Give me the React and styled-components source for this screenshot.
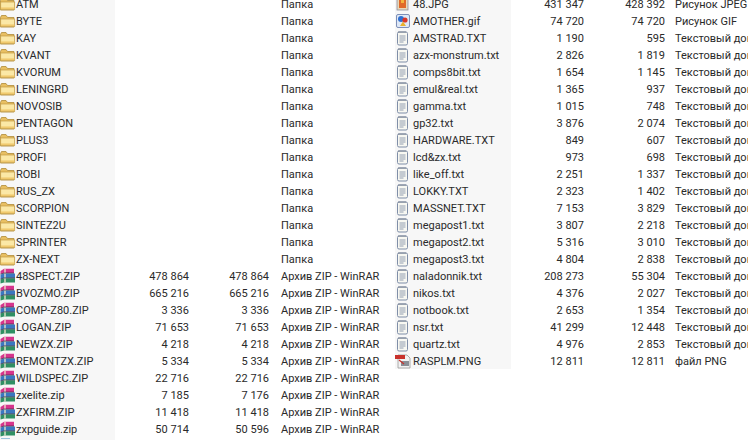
import React from 'react';
import styled, { createGlobalStyle } from 'styled-components';

const GlobalStyle = createGlobalStyle`
  html, body {
    margin: 0;
    padding: 0;
    background: #fff;
    overflow: hidden;
  }
`;

const Page = styled.div`
  width: 748px;
  height: 444px;
  overflow: hidden;
  display: flex;
  align-items: flex-start;
  background: #fff;
  font-family: Roboto, "Noto Sans", sans-serif;
  font-size: 11px;
  color: #2a2a2a;
`;

const Panel = styled.div`
  flex: none;
  width: ${({ $width }) => $width}px;
  margin-top: -5px;
`;

const Row = styled.div`
  display: grid;
  grid-template-columns: ${({ $cols }) => $cols};
  grid-template-rows: 17px;
  height: 17px;
  line-height: 19px;
  white-space: nowrap;
`;

const NameCell = styled.div`
  display: flex;
  align-items: flex-start;
  gap: ${({ $gap }) => $gap}px;
  background: #f7f7f7;
  overflow: hidden;
`;

const NumCell = styled.div`
  text-align: right;
`;

const TypeCell = styled.div`
  padding-left: ${({ $pad }) => $pad}px;
  overflow: hidden;
`;

const Stub = styled.div`
  width: 115px;
  height: 3px;
  background: #f7f7f7;
  display: flex;
  padding: 1px 0 0 1px;
  box-sizing: border-box;
`;

const StubMark = styled.div`
  width: 9px;
  height: 1px;
  background: #9cc4dc;
`;

const FileIcon = styled.svg`
  flex: none;
  width: 16px;
  height: 16px;
  align-self: center;
`;

const FolderIcon = () => (
  <FileIcon viewBox="0 0 16 16">
    <path d="M0.5 4.5 L1.5 2.5 H6 L7.5 4.5 H14 V14 H0.5 Z" fill="#e8bf62" stroke="#b08c3a" strokeWidth="0.8" />
    <path d="M0.6 6 H14.6 V13.6 H0.6 Z" fill="#fbe8a6" stroke="#c29a42" strokeWidth="0.7" />
    <path d="M1 12.2 H14.4" stroke="#efc668" strokeWidth="1.4" />
  </FileIcon>
);

const RarIcon = () => (
  <FileIcon viewBox="0 0 16 16">
    <path d="M0.5 3 L4 0.8 H14 V5 H4 L0.5 6 Z" fill="#d6358c" />
    <path d="M0.5 6.8 L4 5.4 H15 V9.8 H4 L0.5 11 Z" fill="#3a78c0" />
    <path d="M0.5 11.4 L4 10.2 H15 V14.6 H4 L0.5 15.6 Z" fill="#2f8f63" />
    <path d="M5 0.8 V14.6" stroke="#efe9cf" strokeWidth="1.3" />
    <path d="M0.5 6.2 L4 5.1 H14 M0.5 11.1 L4 9.9 H15" stroke="#23233a" strokeWidth="0.7" fill="none" />
  </FileIcon>
);

const TextIcon = () => (
  <FileIcon viewBox="0 0 16 16">
    <rect x="2.5" y="2" width="10" height="13" rx="1.5" fill="#f8f8f2" stroke="#7f8ea8" />
    <path d="M4 1.2 V3 M6 1.2 V3 M8 1.2 V3 M10 1.2 V3" stroke="#6d7688" strokeWidth="0.9" />
    <path d="M4.5 6 H10.5 M4.5 8 H10.5 M4.5 10 H10.5 M4.5 12 H8.5" stroke="#8793a8" strokeWidth="0.9" />
  </FileIcon>
);

const JpegIcon = () => (
  <FileIcon viewBox="0 0 16 16">
    <rect x="2" y="0" width="11" height="14" fill="#e9d8b8" stroke="#8d8fa0" strokeWidth="0.8" />
    <rect x="4" y="2" width="7" height="10" fill="#e06a2a" />
    <path d="M6 2 H9 V7 H6 Z" fill="#f4b63c" />
  </FileIcon>
);

const GifIcon = () => (
  <FileIcon viewBox="0 0 16 16">
    <rect x="1.5" y="1.5" width="13" height="13" rx="1.5" fill="#dfe8f6" stroke="#7d8fb8" />
    <circle cx="6" cy="6" r="3" fill="#2f6fd0" />
    <circle cx="10" cy="7" r="2.6" fill="#d8362a" />
    <path d="M5 13 L8 8.5 L11 13 Z" fill="#e8b030" />
  </FileIcon>
);

const PngIcon = () => (
  <FileIcon viewBox="0 0 16 16">
    <path d="M3 2 H12 L15 5 V15 H3 Z" fill="#f2f2f2" stroke="#9a9a9a" strokeWidth="0.8" />
    <rect x="0" y="2" width="10" height="4" fill="#c8322c" />
    <rect x="6" y="8" width="8" height="5" fill="#8a8f96" />
    <path d="M4 7 L9 11" stroke="#c8322c" strokeWidth="1.2" />
  </FileIcon>
);

const icons = { folder: FolderIcon, rar: RarIcon, txt: TextIcon, jpg: JpegIcon, gif: GifIcon, png: PngIcon };

const folders = ['ATM', 'BYTE', 'KAY', 'KVANT', 'KVORUM', 'LENINGRD', 'NOVOSIB', 'PENTAGON', 'PLUS3', 'PROFI', 'ROBI', 'RUS_ZX', 'SCORPION', 'SINTEZ2U', 'SPRINTER', 'ZX-NEXT'];

const rarType = 'Архив ZIP - WinRAR';
const txtType = 'Текстовый документ';

const leftRows = [
  ...folders.map((name) => ({ icon: 'folder', name, size: '', packed: '', type: 'Папка' })),
  { icon: 'rar', name: '48SPECT.ZIP', size: '478 864', packed: '478 864', type: rarType },
  { icon: 'rar', name: 'BVOZMO.ZIP', size: '665 216', packed: '665 216', type: rarType },
  { icon: 'rar', name: 'COMP-Z80.ZIP', size: '3 336', packed: '3 336', type: rarType },
  { icon: 'rar', name: 'LOGAN.ZIP', size: '71 653', packed: '71 653', type: rarType },
  { icon: 'rar', name: 'NEWZX.ZIP', size: '4 218', packed: '4 218', type: rarType },
  { icon: 'rar', name: 'REMONTZX.ZIP', size: '5 334', packed: '5 334', type: rarType },
  { icon: 'rar', name: 'WILDSPEC.ZIP', size: '22 716', packed: '22 716', type: rarType },
  { icon: 'rar', name: 'zxelite.zip', size: '7 185', packed: '7 176', type: rarType },
  { icon: 'rar', name: 'ZXFIRM.ZIP', size: '11 418', packed: '11 418', type: rarType },
  { icon: 'rar', name: 'zxpguide.zip', size: '50 714', packed: '50 596', type: rarType },
];

const rightRows = [
  { icon: 'jpg', name: '48.JPG', size: '431 347', packed: '428 392', type: 'Рисунок JPEG' },
  { icon: 'gif', name: 'AMOTHER.gif', size: '74 720', packed: '74 720', type: 'Рисунок GIF' },
  ...[
    ['AMSTRAD.TXT', '1 190', '595'],
    ['azx-monstrum.txt', '2 826', '1 819'],
    ['comps8bit.txt', '1 654', '1 145'],
    ['emul&real.txt', '1 365', '937'],
    ['gamma.txt', '1 015', '748'],
    ['gp32.txt', '3 876', '2 074'],
    ['HARDWARE.TXT', '849', '607'],
    ['lcd&zx.txt', '973', '698'],
    ['like_off.txt', '2 251', '1 337'],
    ['LOKKY.TXT', '2 323', '1 402'],
    ['MASSNET.TXT', '7 153', '3 829'],
    ['megapost1.txt', '3 807', '2 218'],
    ['megapost2.txt', '5 316', '3 010'],
    ['megapost3.txt', '4 804', '2 838'],
    ['naladonnik.txt', '208 273', '55 304'],
    ['nikos.txt', '4 376', '2 027'],
    ['notbook.txt', '2 653', '1 354'],
    ['nsr.txt', '41 299', '12 448'],
    ['quartz.txt', '4 976', '2 853'],
  ].map(([name, size, packed]) => ({ icon: 'txt', name, size, packed, type: txtType })),
  { icon: 'png', name: 'RASPLM.PNG', size: '12 811', packed: '12 811', type: 'файл PNG' },
];

const FileTable = ({ rows, width, cols, gap, pad, children }) => (
  <Panel $width={width}>
    {rows.map((row) => {
      const Icon = icons[row.icon];
      return (
        <Row key={row.name} $cols={cols}>
          <NameCell $gap={gap}>
            <Icon />
            {row.name}
          </NameCell>
          <NumCell>{row.size}</NumCell>
          <NumCell>{row.packed}</NumCell>
          <TypeCell $pad={pad}>{row.type}</TypeCell>
        </Row>
      );
    })}
    {children}
  </Panel>
);

export default function App() {
  return (
    <Page>
      <GlobalStyle />
      <FileTable rows={leftRows} width={395} cols="115px 74px 80px 126px" gap={0} pad={12}>
        <Stub>
          <StubMark />
        </Stub>
      </FileTable>
      <FileTable rows={rightRows} width={353} cols="116px 73px 81px 83px" gap={2} pad={10} />
    </Page>
  );
}
